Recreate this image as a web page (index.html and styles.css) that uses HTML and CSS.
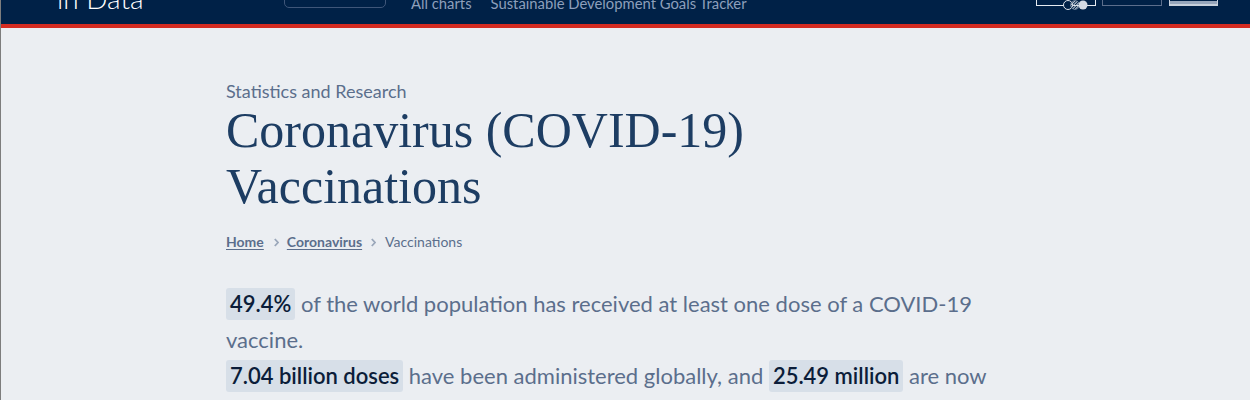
FILE: index.html
```html
<!DOCTYPE html>
<html lang="en">
<head>
<meta charset="utf-8">
<title>Coronavirus (COVID-19) Vaccinations</title>
<link rel="stylesheet" href="styles.css">
</head>
<body>
<header class="site-header">
  <div class="header-row">
    <a class="logo" href="#">in Data</a>
    <div class="search-box"></div>
    <nav class="main-nav">
      <a href="#">All charts</a>
      <a href="#">Sustainable Development Goals Tracker</a>
    </nav>
    <div class="header-tools">
      <div class="tool tool-light">
        <svg class="dots" width="32" height="12" viewBox="0 0 32 12">
          <defs>
            <pattern id="hatch" width="2" height="2" patternUnits="userSpaceOnUse" patternTransform="rotate(45)">
              <rect width="1" height="2" fill="#c8d0db"/>
            </pattern>
          </defs>
          <circle cx="6" cy="6" r="4.5" fill="#002147" stroke="#dfe5ec" stroke-width="1"/>
          <circle cx="13" cy="6" r="4.5" fill="url(#hatch)" stroke="#7e8ea8" stroke-width="0.6"/>
          <circle cx="21" cy="6" r="4.5" fill="#d3dae3"/>
        </svg>
      </div>
      <div class="tool tool-dim"></div>
      <div class="tool tool-filled"></div>
    </div>
  </div>
  <div class="accent"></div>
</header>

<main class="page">
  <div class="content">
    <p class="kicker">Statistics and Research</p>
    <h1 class="title">Coronavirus (COVID-19) Vaccinations</h1>
    <div class="breadcrumb">
      <a href="#">Home</a>
      <svg class="sep sep-first" width="5" height="9" viewBox="0 0 5 9"><path d="M0.8 1 L4 4.5 L0.8 8" fill="none" stroke="#9aa7ba" stroke-width="1.8"/></svg>
      <a href="#">Coronavirus</a>
      <svg class="sep" width="5" height="9" viewBox="0 0 5 9"><path d="M0.8 1 L4 4.5 L0.8 8" fill="none" stroke="#9aa7ba" stroke-width="1.8"/></svg>
      <span class="current">Vaccinations</span>
    </div>
    <p class="lead">
      <span class="num">49.4%</span> of the world population has received at least one dose of a COVID-19 vaccine.<br>
      <span class="num">7.04 billion doses</span> have been administered globally, and <span class="num">25.49 million</span> are now administered each day.
    </p>
  </div>
</main>
</body>
</html>
```

FILE: styles.css
```css
* { box-sizing: border-box; }

html, body {
  margin: 0;
  padding: 0;
}

body {
  background: #ebeef2;
  border-left: 1px solid #7d7d7d;
  font-family: Lato, "Open Sans", sans-serif;
  height: 400px;
  overflow: hidden;
}

.site-header {
  background: #002147;
}

.header-row {
  height: 24px;
  overflow: hidden;
  display: flex;
  align-items: flex-end;
  padding-bottom: 18px;
  padding-left: 56px;
}

.logo {
  color: #ffffff;
  text-decoration: none;
  font-family: Lato, sans-serif;
  font-weight: 300;
  font-size: 28px;
  line-height: 28px;
  margin-bottom: -6px;
  width: 227px;
  flex: none;
}

.search-box {
  width: 102px;
  height: 40px;
  border: 1px solid #3f5679;
  border-radius: 5px;
  margin-bottom: -2px;
  flex: none;
}

.main-nav {
  display: flex;
  gap: 19px;
  margin-left: 25px;
  margin-bottom: -4px;
  flex: none;
}

.main-nav a {
  color: #8d9fbb;
  text-decoration: none;
  font-size: 14.8px;
  line-height: 14px;
}

.header-tools {
  margin-left: auto;
  margin-right: 32px;
  display: flex;
  gap: 6px;
  align-items: flex-end;
}

.tool {
  height: 30px;
  position: relative;
}

.tool-light {
  width: 60px;
  border: 1px solid #e6ebf1;
}

.dots {
  position: absolute;
  right: 1px;
  bottom: -6px;
}

.tool-dim {
  width: 60px;
  border: 1px solid #5c6e8c;
}

.tool-filled {
  width: 49px;
  margin-left: 1px;
  border: 1px solid #c7d0db;
  border-bottom: 2px solid #c7d0db;
  background: linear-gradient(to bottom, #002147 0, #002147 calc(100% - 3px), #97a6bb calc(100% - 3px));
}

.accent {
  height: 4px;
  background: #d42b21;
}

.page {
  padding: 0 225px;
}

.content {
  max-width: 790px;
}

.kicker {
  margin: 0;
  padding-top: 52px;
  font-size: 18px;
  line-height: 22px;
  color: #5b6e8c;
}

.title {
  margin: 0;
  font-family: "Liberation Serif", "Times New Roman", serif;
  font-weight: 400;
  font-size: 50px;
  line-height: 56px;
  color: #1d3d63;
  max-width: 560px;
}

.breadcrumb {
  margin-top: 19px;
  font-size: 14px;
  line-height: 18px;
  color: #5b6e8c;
  display: flex;
  align-items: center;
  gap: 9px;
}

.breadcrumb a {
  color: #5b6e8c;
  font-weight: 700;
  text-decoration: underline;
  text-underline-offset: 2px;
}

.breadcrumb .sep-first {
  margin-left: 1px;
  margin-right: -1px;
}

.breadcrumb .current {
  color: #5b6e8c;
}

.lead {
  margin: 35px 0 0;
  font-size: 22px;
  line-height: 36px;
  color: #5b6e8c;
}

.num {
  background: #d7dfe8;
  color: #0b1d39;
  font-weight: 600;
  padding: 2px 4px 3px;
  border-radius: 3px;
}
```
